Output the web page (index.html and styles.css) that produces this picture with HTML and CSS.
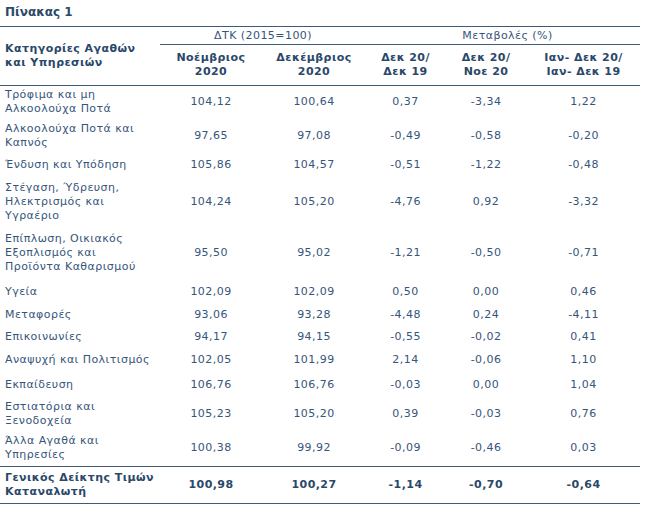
FILE: index.html
```html
<!DOCTYPE html>
<html lang="el">
<head>
<meta charset="utf-8">
<title>Πίνακας 1</title>
<link rel="stylesheet" href="styles.css">
</head>
<body>
<div class="title">Πίνακας 1</div>
<table class="cpi">
  <colgroup>
    <col class="c1"><col class="c2"><col class="c3"><col class="c4"><col class="c5"><col class="c6">
  </colgroup>
  <thead>
    <tr class="group-row">
      <th rowspan="2" class="cat-head">Κατηγορίες Αγαθών<br>και Υπηρεσιών</th>
      <th colspan="2" class="group">ΔΤΚ (2015=100)</th>
      <th colspan="3" class="group group-change">Μεταβολές (%)</th>
    </tr>
    <tr class="col-row">
      <th>Νοέμβριος<br>2020</th>
      <th>Δεκέμβριος<br>2020</th>
      <th>Δεκ 20/<br>Δεκ 19</th>
      <th>Δεκ 20/<br>Νοε 20</th>
      <th>Ιαν- Δεκ 20/<br>Ιαν- Δεκ 19</th>
    </tr>
  </thead>
  <tbody>
    <tr class="h32"><td>Τρόφιμα και μη<br>Αλκοολούχα Ποτά</td><td>104,12</td><td>100,64</td><td>0,37</td><td>-3,34</td><td>1,22</td></tr>
    <tr class="h36"><td>Αλκοολούχα Ποτά και<br>Καπνός</td><td>97,65</td><td>97,08</td><td>-0,49</td><td>-0,58</td><td>-0,20</td></tr>
    <tr class="h23"><td>Ένδυση και Υπόδηση</td><td>105,86</td><td>104,57</td><td>-0,51</td><td>-1,22</td><td>-0,48</td></tr>
    <tr class="h50"><td>Στέγαση, Ύδρευση,<br>Ηλεκτρισμός και<br>Υγραέριο</td><td>104,24</td><td>105,20</td><td>-4,76</td><td>0,92</td><td>-3,32</td></tr>
    <tr class="h53"><td>Επίπλωση, Οικιακός<br>Εξοπλισμός και<br>Προϊόντα Καθαρισμού</td><td>95,50</td><td>95,02</td><td>-1,21</td><td>-0,50</td><td>-0,71</td></tr>
    <tr class="h24"><td>Υγεία</td><td>102,09</td><td>102,09</td><td>0,50</td><td>0,00</td><td>0,46</td></tr>
    <tr class="h22"><td>Μεταφορές</td><td>93,06</td><td>93,28</td><td>-4,48</td><td>0,24</td><td>-4,11</td></tr>
    <tr class="h22"><td>Επικοινωνίες</td><td>94,17</td><td>94,15</td><td>-0,55</td><td>-0,02</td><td>0,41</td></tr>
    <tr class="h25"><td>Αναψυχή και Πολιτισμός</td><td>102,05</td><td>101,99</td><td>2,14</td><td>-0,06</td><td>1,10</td></tr>
    <tr class="h25"><td>Εκπαίδευση</td><td>106,76</td><td>106,76</td><td>-0,03</td><td>0,00</td><td>1,04</td></tr>
    <tr class="h32"><td>Εστιατόρια και<br>Ξενοδοχεία</td><td>105,23</td><td>105,20</td><td>0,39</td><td>-0,03</td><td>0,76</td></tr>
    <tr class="h37"><td>Άλλα Αγαθά και<br>Υπηρεσίες</td><td>100,38</td><td>99,92</td><td>-0,09</td><td>-0,46</td><td>0,03</td></tr>
  </tbody>
  <tfoot>
    <tr class="total"><td>Γενικός Δείκτης Τιμών<br>Καταναλωτή</td><td>100,98</td><td>100,27</td><td>-1,14</td><td>-0,70</td><td>-0,64</td></tr>
  </tfoot>
</table>
</body>
</html>
```
FILE: styles.css
```css
html, body {
  margin: 0;
  padding: 0;
  background: #ffffff;
}
body {
  font-family: "DejaVu Sans", Verdana, sans-serif;
  font-size: 11px;
  line-height: 14px;
  letter-spacing: 0.45px;
  color: #36557a;
}
.title {
  font-size: 12px;
  line-height: 15px;
  font-weight: bold;
  letter-spacing: 0;
  color: #2a4869;
  padding: 5px 5px 6px;
}
.cpi {
  width: 640px;
  border-collapse: collapse;
  table-layout: fixed;
}
.c1 { width: 160px; }
.c2 { width: 102px; }
.c3 { width: 104px; }
.c4 { width: 79px; }
.c5 { width: 82px; }
.c6 { width: 113px; }
.cpi th, .cpi td {
  padding: 0 5px;
  text-align: center;
  vertical-align: middle;
  white-space: nowrap;
}
.cpi th {
  font-weight: bold;
  color: #2a4869;
}
.cpi thead tr:first-child th {
  border-top: 1px solid #3f5a78;
}
.group-row { height: 18px; }
.cpi th.group {
  font-weight: normal;
  color: #36557a;
  border-bottom: 1px solid #3f5a78;
}
.cpi th.group-change { padding-left: 14px; }
.cpi th.cat-head {
  text-align: left;
  border-bottom: 1px solid #3f5a78;
}
.col-row { height: 41px; }
.col-row th { border-bottom: 1px solid #3f5a78; }
.cpi td:first-child { text-align: left; }
.h22 { height: 22px; }
.h23 { height: 23px; }
.h24 { height: 24px; }
.h25 { height: 25px; }
.h32 { height: 32px; }
.h36 { height: 36px; }
.h37 { height: 37px; }
.h50 { height: 50px; }
.h53 { height: 53px; }
.total { height: 37px; }
.total td {
  font-weight: bold;
  color: #2a4869;
  border-top: 1px solid #3f5a78;
  border-bottom: 1px solid #3f5a78;
}
```
